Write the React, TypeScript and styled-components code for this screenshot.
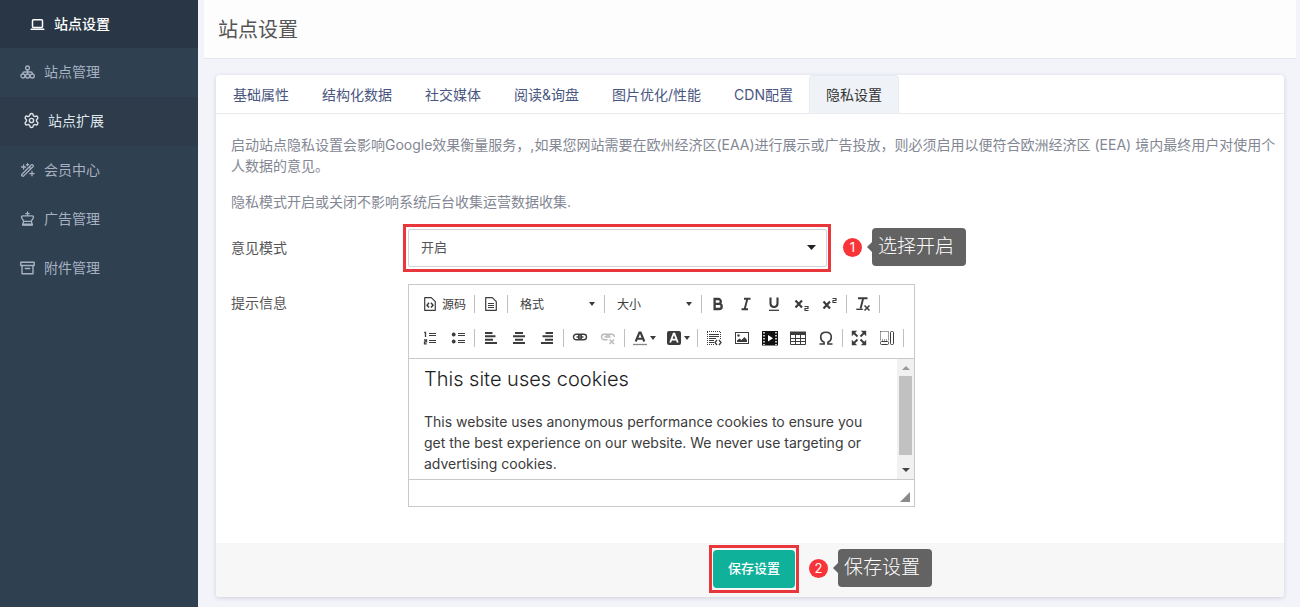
import React from "react";
import styled, { createGlobalStyle, css } from "styled-components";
import { Settings } from "lucide-react";

const GlobalStyle = createGlobalStyle`
  *, *::before, *::after { box-sizing: border-box; }
  body {
    margin: 0;
    background: #f3f3fa;
    color: #555;
    font-family: Inter, "Noto Sans CJK SC", sans-serif;
    font-size: 14px;
    line-height: 21px;
  }
  button, select { font: inherit; color: inherit; }
`;

/* ---------- page frame ---------- */

const Page = styled.div`
  display: flex;
  min-height: 100vh;
`;

const Sidebar = styled.nav`
  flex: 0 0 198px;
  background: #2f4050;
`;

const Menu = styled.ul`
  list-style: none;
  margin: 0;
  padding: 0;
`;

type Tone = "active" | "open" | "plain";

const MenuLink = styled.a<{ $tone: Tone }>`
  display: flex;
  align-items: center;
  gap: 9px;
  height: 49px;
  padding: 0 0 2px 20px;
  color: #a7b1c2;
  text-decoration: none;
  svg { flex: none; }
  ${(p) =>
    p.$tone === "active" &&
    css`
      height: 48px;
      padding-left: 30px;
      background: #283645;
      color: #fff;
      font-weight: 500;
    `}
  ${(p) =>
    p.$tone === "open" &&
    css`
      gap: 8px;
      padding-left: 23px;
      background: #2d3b4a;
      color: #dfe4ea;
    `}
`;

const Main = styled.main`
  flex: 1;
  min-width: 0;
  padding: 0 4px 10px 6px;
`;

const PageHeader = styled.header`
  display: flex;
  align-items: center;
  height: 59px;
  padding: 2px 14px 0;
  background: #fdfdfd;
  border-bottom: 1px solid #e6e8ee;
`;

const PageTitle = styled.h1`
  margin: 0;
  font-size: 20px;
  line-height: 28px;
  font-weight: 400;
  color: #555;
`;

const Card = styled.section`
  margin: 16px 12px 0;
  background: #fff;
  border-radius: 4px;
  box-shadow: 0 1px 4px rgba(40, 50, 80, 0.18);
`;

const Tabs = styled.div`
  display: flex;
  border-bottom: 1px solid #e9ebef;
`;

const Tab = styled.button<{ $active?: boolean }>`
  height: 38px;
  margin-right: -1px;
  padding: 0 16px;
  border: 1px solid ${(p) => (p.$active ? "#e8ebf0" : "transparent")};
  border-bottom: 0;
  border-radius: 4px 4px 0 0;
  background: ${(p) => (p.$active ? "#eff2f6" : "transparent")};
  color: ${(p) => (p.$active ? "#333" : "#495680")};
  white-space: nowrap;
`;

const Body = styled.div`
  padding: 20px 8px 36px 15px;
`;

const Note = styled.p`
  margin: 0 0 15px;
  color: #838793;
`;

const Field = styled.div`
  display: grid;
  grid-template-columns: 177px minmax(0, 1fr);
  margin-top: 17px;
`;

const FieldLabel = styled.label`
  line-height: 38px;
`;

const Inline = styled.div`
  display: flex;
  align-items: center;
`;

/* ---------- annotations ---------- */

const Marked = styled.div`
  position: relative;
  display: flex;
  &::after {
    content: "";
    position: absolute;
    inset: -5px -4px;
    border: 3px solid #e8363b;
    pointer-events: none;
  }
`;

const MarkedSelect = styled(Marked)`
  flex: 0 1 419px;
  &::after { left: -5px; }
`;

const Callout = styled.div`
  display: flex;
  align-items: center;
  gap: 10px;
  margin: -1px 0 1px 16px;
`;

const FooterCallout = styled(Callout)`
  position: absolute;
  left: 100%;
  top: 0;
  margin-left: 14px;
`;

const Badge = styled.span`
  flex: none;
  width: 19px;
  border-radius: 50%;
  background: #f93439;
  color: #fff;
  font-size: 13px;
  line-height: 19px;
  text-align: center;
`;

const Bubble = styled.span`
  position: relative;
  padding: 0 12px 0 6px;
  border-radius: 4px;
  background: #636363;
  color: #fff;
  font-size: 19px;
  font-weight: 300;
  line-height: 38px;
  white-space: nowrap;
  &::before {
    content: "";
    position: absolute;
    left: -5px;
    top: 14px;
    border: solid transparent;
    border-width: 5px 5px 5px 0;
    border-right-color: #636363;
  }
`;

/* ---------- select ---------- */

const Select = styled.select`
  appearance: none;
  width: 100%;
  height: 38px;
  padding: 0 32px 2px 12px;
  border: 1px solid #d0d3d8;
  border-radius: 2px;
  background: #fff;
  font-size: 13px;
`;

const SelectCaret = styled.svg`
  position: absolute;
  right: 11px;
  top: 16px;
  pointer-events: none;
`;

/* ---------- rich text editor ---------- */

const Editor = styled.div`
  max-width: 507px;
  border: 1px solid #c9c9c9;
  background: #fff;
`;

const Toolbar = styled.div`
  display: flex;
  flex-direction: column;
  gap: 6px;
  padding: 5px 7px 6px;
  border-bottom: 1px solid #c9c9c9;
`;

const ToolRow = styled.div`
  display: flex;
  align-items: center;
  height: 28px;
`;

const Separator = styled.span`
  flex: none;
  width: 1px;
  height: 18px;
  margin: 0 2px;
  background: #c0c0c0;
`;

const Tool = styled.button<{ $dim?: boolean }>`
  display: flex;
  align-items: center;
  gap: 4px;
  height: 28px;
  padding: 0 6px;
  border: 0;
  background: none;
  color: #3c3c3c;
  font-size: 12px;
  white-space: nowrap;
  opacity: ${(p) => (p.$dim ? 0.35 : 1)};
  svg { flex: none; }
`;

const ColorTool = styled(Tool)`
  gap: 2px;
  padding: 0 5px;
`;

const Combo = styled(Tool)`
  justify-content: space-between;
  width: 92px;
  padding: 0 7px 0 10px;
`;

const Content = styled.div`
  display: flex;
  height: 121px;
  border-bottom: 1px solid #c9c9c9;
`;

const Document = styled.div`
  flex: 1;
  min-width: 0;
  padding: 8px 15px 0;
  overflow: hidden;
  color: #3c3c3c;
  outline: none;
  h2 {
    margin: 0 0 20px;
    font-size: 20px;
    line-height: 24px;
    font-weight: 300;
    color: #222;
  }
  p { margin: 0; }
`;

const ScrollTrack = styled.div`
  display: flex;
  flex-direction: column;
  align-items: center;
  width: 17px;
  padding: 7px 0;
  background: #f1f1f1;
`;

const ScrollThumb = styled.div`
  flex: 0 0 79px;
  width: 13px;
  margin: 6px 0 auto;
  background: #c1c1c1;
`;

const StatusBar = styled.div`
  display: flex;
  justify-content: flex-end;
  align-items: flex-end;
  height: 26px;
  padding: 4px;
`;

const Footer = styled.footer`
  display: flex;
  justify-content: center;
  padding: 7px 0 9px 8px;
  background: #f7f7f7;
  border-radius: 0 0 4px 4px;
`;

const SaveButton = styled.button`
  height: 38px;
  padding: 0 15px 2px;
  border: 0;
  border-radius: 4px;
  background: #10b19b;
  color: #fff;
  font-size: 13px;
  font-weight: 500;
`;

/* ---------- drawings ---------- */

const Line = ({ size = 15, children }: { size?: number; children: React.ReactNode }) => (
  <svg width={size} height={size} viewBox="0 0 15 15" fill="none" stroke="currentColor" strokeWidth="1.3" strokeLinejoin="round" strokeLinecap="round" aria-hidden="true">
    {children}
  </svg>
);

const LaptopIcon = () => (
  <Line>
    <rect x="2.5" y="3.7" width="10" height="7.8" rx="1" strokeWidth="1.5" />
    <path d="M1.2 13.300h12.600" strokeWidth="1.6" />
  </Line>
);

const SitemapIcon = () => (
  <Line>
    <circle cx="7.5" cy="3.9" r="1.9" />
    <circle cx="2.9" cy="12" r="2" />
    <circle cx="7.6" cy="12" r="2" />
    <circle cx="12.3" cy="12" r="2" />
    <path d="M7.500 6v3.800M2.900 9.800V9.200q0-1.200 1.200-1.200h7q1.200 0 1.200 1.200v.6" />
  </Line>
);

const WandIcon = () => (
  <Line>
    <path d="M2 12.300 11.200 3q.9-.8 1.700 0t0 1.700L3.700 13.900q-.9.700-1.700-.1t0-1.500ZM9.200 5l1.700 1.700" />
    <path d="M3.600 3v4M1.600 5h4M7.500 1.700v2M6.500 2.700h2M12 9.400v4.400M9.800 11.600h4.400" />
  </Line>
);

const KingIcon = () => (
  <Line>
    <path d="M7.500 1v3.800M5.800 2.600h3.400M3.800 10.400 1.600 6.600q-.5-1.800 1.500-1.800h8.800q2 0 1.500 1.800l-2.200 3.800ZM3.600 10.400 2.700 14h9.600l-.9-3.600" />
    <path d="M3 13.400h9" strokeWidth="2" />
  </Line>
);

const ArchiveIcon = () => (
  <Line>
    <path d="M.8 2.200h13.400v3.300H.8ZM2 5.500v8.300h11V5.500M5.300 8.500h4.400" strokeWidth="1.400" />
  </Line>
);

const Glyph = ({ children }: { children: React.ReactNode }) => (
  <svg width="16" height="16" viewBox="0 0 16 16" fill="none" stroke="currentColor" strokeWidth="1.4" aria-hidden="true">
    {children}
  </svg>
);

const Caret = () => (
  <svg width="6" height="4" viewBox="0 0 6 4" aria-hidden="true">
    <path d="M0 0h6L3 4Z" fill="currentColor" />
  </svg>
);

const page = <path d="M2.700 1.700h6.600l4 4v8.600H2.700Z" strokeLinejoin="round" strokeWidth="1.200" />;

const glyphs = {
  source: <>{page}<path d="M7 6.800 5 9.200l2 2.400M9 6.800l2 2.400-2 2.400" strokeWidth="1.500" /></>,
  template: <>{page}<path d="M5 7.500h6M5 9.500h6M5 11.500h6" strokeWidth="1" /></>,
  bold: <path d="M4.600 3h3.800a2.300 2.300 0 0 1 0 4.800H4.600Zm0 4.800h4.500a2.600 2.600 0 0 1 0 5.200H4.600Z" strokeWidth="2.300" />,
  italic: <path d="M6 2.800h6.500M3.500 13.200H10M9.400 2.800 6.600 13.200" strokeWidth="1.900" />,
  underline: <><path d="M4.500 1.500V7.500q0 3.500 3.500 3.500t3.500-3.500v-6" strokeWidth="2.100" /><path d="M3 14.300h10" strokeWidth="1.300" /></>,
  sub: <><path d="m1.500 4.500 6.500 7M8 4.500l-6.500 7" strokeWidth="2.200" /><path d="M10.500 10.500h3.500v2h-3v2h3.500" strokeWidth="1.200" /></>,
  sup: <><path d="m1.500 5.500 6.500 7M8 5.500l-6.500 7" strokeWidth="2.200" /><path d="M10.500 2.500h3.500v2h-3v2h3.500" strokeWidth="1.200" /></>,
  clear: <><path d="M3 2.300h9.500M8.200 2.300 5.600 12.500" strokeWidth="1.900" /><path d="M1.300 13.300h6.500" /><path d="m9.500 9.500 5 5M14.500 9.500l-5 5" strokeWidth="1.500" /></>,
  ordered: <><path d="M7 3.500h7M7 5.500h7M7 10.500h7M7 12.500h7" strokeWidth="1" /><path d="M2.200 2.500h1.300V7M2 10h2.500v1.800H2.500v2h2.200" strokeWidth="1.300" /></>,
  bullets: <><path d="M8 3.500h7M8 5.500h7M8 10.500h7M8 12.500h7" strokeWidth="1" /><circle cx="3.700" cy="4.500" r="1.900" fill="currentColor" stroke="none" /><circle cx="3.700" cy="11.500" r="1.900" fill="currentColor" stroke="none" /></>,
  left: <path d="M2 3h7.500M2 6.300h10.500M2 9.700h8M2 13h12" strokeWidth="1.900" />,
  center: <path d="M4 3h8M2 6.300h12M4 9.700h8M2 13h12" strokeWidth="1.900" />,
  right: <path d="M6.500 3H14M3.500 6.300H14M6 9.700h8M2 13h12" strokeWidth="1.900" />,
  link: <><rect x="1.500" y="4.300" width="8" height="5.400" rx="2.700" /><rect x="6.500" y="4.300" width="8" height="5.400" rx="2.700" /><path d="M4.500 7h7" /></>,
  unlink: <><path d="M7.500 9.700H4.200a2.700 2.700 0 0 1 0-5.400H7a2.700 2.700 0 0 1 2.600 2.700M6.500 7A2.700 2.700 0 0 1 9 4.300h2.800q2.600.1 2.600 2.800M4.500 7h6" /><path d="m9.500 9.500 4.500 4.500M14 9.500 9.500 14" /></>,
  textColor: <><path d="M3.700 11.500 7.400 2.500h1.200l3.700 9M5 8.700h6" strokeWidth="2.100" /><path d="M1 14.500h14" stroke="#888" strokeWidth="1.300" /></>,
  fillColor: <><rect x="1" y="1" width="14" height="14" rx="2" fill="currentColor" stroke="none" /><path d="M4.200 12.500 7.600 3.700h.8l3.400 8.800M5.500 9.700h5" stroke="#fff" strokeWidth="1.800" /></>,
  showBlocks: <><path d="M1 1.500h14M1 14.500h8M1.500 2v12M14.500 2v7" strokeDasharray="1 1" strokeWidth="1" /><path d="M3 4.500h10M3 6.500h10M3 8.500h7M3 10.500h5M3 12.500h5" strokeWidth="1" /><path d="m11 10-2 2.500 2 2.500M13 10l2 2.500-2 2.500" strokeWidth="1.300" /></>,
  image: <><rect x="1.500" y="2.500" width="13" height="11" strokeWidth="1" /><path d="m3 12 0-1.500 2.500-2 2 1.500L10.500 7l2.500 3V12Z" fill="currentColor" stroke="none" /><circle cx="4.500" cy="5.500" r="1.200" fill="currentColor" stroke="none" /></>,
  video: <><rect y="1" width="16" height="14.500" fill="#111" stroke="none" /><path d="M2 2v13M14 2v13" stroke="#fff" strokeWidth="1.500" strokeDasharray="1.500 1.500" /><path d="m6 5 5 3.200L6 11.500Z" fill="#fff" stroke="none" /></>,
  table: <><path d="M0 1.500h16v3.500H0Z" fill="currentColor" stroke="none" /><path d="M.5 2v12.500h15V2M.5 8.500h15M.5 11.500h15M5.500 3v11.500M10.500 3v11.500" strokeWidth="1" /></>,
  omega: <path d="M1.500 14h4.600v-1.800Q2.700 10.600 2.700 7.200q0-5 5.300-5t5.300 5q0 3.400-3.400 5V14h4.600" strokeWidth="1.600" />,
  maximize: <><path d="m3 3 3.500 3.500M13 3 9.500 6.500M3 13l3.500-3.500M13 13 9.500 9.500" strokeWidth="1.900" /><path d="M.8.800h5.400L.8 6.200ZM15.200.800H9.800l5.400 5.400ZM.8 15.200h5.400L.8 9.800ZM15.200 15.200H9.800l5.400-5.400Z" fill="currentColor" stroke="none" /></>,
  blocks: <><path d="M1.500 1.500h8v8.500h-8Z" strokeDasharray="1 1" strokeWidth="1" /><rect x="1.500" y="11.500" width="8" height="3" rx="1" strokeWidth="1" /><rect x="11.500" y="1.500" width="3" height="13" rx="1" strokeWidth="1" /></>,
};

type GlyphName = keyof typeof glyphs;

const IconTool = ({ icon, label, dim }: { icon: GlyphName; label: string; dim?: boolean }) => (
  <Tool type="button" aria-label={label} disabled={dim} $dim={dim}>
    <Glyph>{glyphs[icon]}</Glyph>
  </Tool>
);

/* ---------- data ---------- */

const menu: { label: string; tone: Tone; icon: React.ReactNode }[] = [
  { label: "站点设置", tone: "active", icon: <LaptopIcon /> },
  { label: "站点管理", tone: "plain", icon: <SitemapIcon /> },
  { label: "站点扩展", tone: "open", icon: <Settings size={17} strokeWidth={2} aria-hidden="true" /> },
  { label: "会员中心", tone: "plain", icon: <WandIcon /> },
  { label: "广告管理", tone: "plain", icon: <KingIcon /> },
  { label: "附件管理", tone: "plain", icon: <ArchiveIcon /> },
];

const tabs = ["基础属性", "结构化数据", "社交媒体", "阅读&询盘", "图片优化/性能", "CDN配置", "隐私设置"];

/* ---------- app ---------- */

export default function App() {
  return (
    <Page>
      <GlobalStyle />
      <Sidebar>
        <Menu>
          {menu.map((item) => (
            <li key={item.label}>
              <MenuLink href="#" $tone={item.tone}>
                {item.icon}
                {item.label}
              </MenuLink>
            </li>
          ))}
        </Menu>
      </Sidebar>
      <Main>
        <PageHeader>
          <PageTitle>站点设置</PageTitle>
        </PageHeader>
        <Card>
          <Tabs role="tablist">
            {tabs.map((tab) => (
              <Tab key={tab} type="button" role="tab" aria-selected={tab === "隐私设置"} $active={tab === "隐私设置"}>
                {tab}
              </Tab>
            ))}
          </Tabs>
          <Body>
            <Note>
              启动站点隐私设置会影响Google效果衡量服务，,如果您网站需要在欧州经济区(EAA)进行展示或广告投放，则必须启用以便符合欧洲经济区 (EEA) 境内最终用户对使用个人数据的意见。
            </Note>
            <Note>隐私模式开启或关闭不影响系统后台收集运营数据收集.</Note>
            <Field>
              <FieldLabel htmlFor="mode">意见模式</FieldLabel>
              <Inline>
                <MarkedSelect>
                  <Select id="mode" defaultValue="on">
                    <option value="on">开启</option>
                    <option value="off">关闭</option>
                  </Select>
                  <SelectCaret width="9" height="5" viewBox="0 0 9 5" aria-hidden="true">
                    <path d="M0 0h9L4.500 5Z" fill="#222" />
                  </SelectCaret>
                </MarkedSelect>
                <Callout>
                  <Badge>1</Badge>
                  <Bubble>选择开启</Bubble>
                </Callout>
              </Inline>
            </Field>
            <Field>
              <FieldLabel as="span" id="message-label">提示信息</FieldLabel>
              <Editor>
                <Toolbar role="toolbar" aria-label="编辑器">
                  <ToolRow>
                    <Tool type="button">
                      <Glyph>{glyphs.source}</Glyph>
                      源码
                    </Tool>
                    <Separator />
                    <IconTool icon="template" label="模板" />
                    <Separator />
                    <Combo type="button">格式<Caret /></Combo>
                    <Separator />
                    <Combo type="button">大小<Caret /></Combo>
                    <Separator />
                    <IconTool icon="bold" label="加粗" />
                    <IconTool icon="italic" label="倾斜" />
                    <IconTool icon="underline" label="下划线" />
                    <IconTool icon="sub" label="下标" />
                    <IconTool icon="sup" label="上标" />
                    <Separator />
                    <IconTool icon="clear" label="清除格式" />
                    <Separator />
                  </ToolRow>
                  <ToolRow>
                    <IconTool icon="ordered" label="编号列表" />
                    <IconTool icon="bullets" label="项目列表" />
                    <Separator />
                    <IconTool icon="left" label="左对齐" />
                    <IconTool icon="center" label="居中" />
                    <IconTool icon="right" label="右对齐" />
                    <Separator />
                    <IconTool icon="link" label="超链接" />
                    <IconTool icon="unlink" label="取消超链接" dim />
                    <Separator />
                    <ColorTool type="button" aria-label="文本颜色"><Glyph>{glyphs.textColor}</Glyph><Caret /></ColorTool>
                    <ColorTool type="button" aria-label="背景颜色"><Glyph>{glyphs.fillColor}</Glyph><Caret /></ColorTool>
                    <Separator />
                    <IconTool icon="showBlocks" label="代码段" />
                    <IconTool icon="image" label="图像" />
                    <IconTool icon="video" label="视频" />
                    <IconTool icon="table" label="表格" />
                    <IconTool icon="omega" label="特殊符号" />
                    <Separator />
                    <IconTool icon="maximize" label="全屏" />
                    <IconTool icon="blocks" label="显示区块" />
                    <Separator />
                  </ToolRow>
                </Toolbar>
                <Content>
                  <Document contentEditable suppressContentEditableWarning role="textbox" aria-multiline="true" aria-labelledby="message-label">
                    <h2>This site uses cookies</h2>
                    <p>
                      This website uses anonymous performance cookies to ensure you get the best experience on our website. We never use targeting or advertising cookies.
                    </p>
                  </Document>
                  <ScrollTrack aria-hidden="true">
                    <svg width="8" height="4" viewBox="0 0 8 4"><path d="M0 4h8L4 0Z" fill="#999" /></svg>
                    <ScrollThumb />
                    <svg width="8" height="4" viewBox="0 0 8 4"><path d="M0 0h8L4 4Z" fill="#444" /></svg>
                  </ScrollTrack>
                </Content>
                <StatusBar>
                  <svg width="10" height="10" viewBox="0 0 10 10" aria-hidden="true"><path d="M10 0v10H0Z" fill="#8a8a8a" /></svg>
                </StatusBar>
              </Editor>
            </Field>
          </Body>
          <Footer>
            <Marked>
              <SaveButton type="button">保存设置</SaveButton>
              <FooterCallout>
                <Badge>2</Badge>
                <Bubble>保存设置</Bubble>
              </FooterCallout>
            </Marked>
          </Footer>
        </Card>
      </Main>
    </Page>
  );
}
